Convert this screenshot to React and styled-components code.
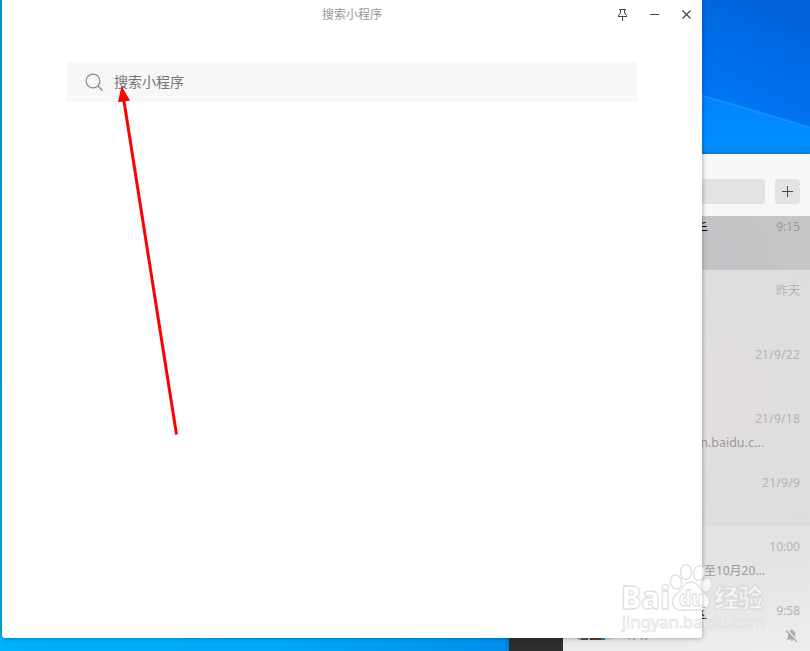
import React from 'react'
import styled, { createGlobalStyle } from 'styled-components'

const GlobalStyle = createGlobalStyle`
  * {
    box-sizing: border-box;
  }
  body {
    margin: 0;
    overflow: hidden;
    font-family: 'Noto Sans', 'Noto Sans CJK SC', sans-serif;
    font-size: 12px;
  }
`

const Desktop = styled.div`
  position: relative;
  width: 810px;
  height: 651px;
  overflow: hidden;
  background: linear-gradient(90deg, #00b0fa 0%, #00a8f8 35%, #008eec 63%);
`
const Wallpaper = styled.svg`
  position: absolute;
  top: 0;
  left: 0;
`

const ChatWindow = styled.div`
  position: absolute;
  left: 509px;
  top: 154px;
  width: 301px;
  height: 497px;
  display: flex;
  box-shadow: 0 0 6px rgba(0, 0, 0, 0.3);
`
const Rail = styled.div`
  width: 54px;
  background: #2e2e2e;
`
const ChatPane = styled.div`
  flex: 1;
  display: flex;
  flex-direction: column;
  background: #e6e5e4;
`
const ChatTop = styled.div`
  height: 62px;
  display: flex;
  gap: 10px;
  padding: 25px 10px 12px 12px;
  background: #f7f7f7;
`
const ChatSearch = styled.div`
  flex: 1;
  border-radius: 4px;
  background: #e2e2e2;
`
const AddButton = styled.div`
  width: 25px;
  display: flex;
  align-items: center;
  justify-content: center;
  border-radius: 4px;
  background: #e2e2e2;
`
const ChatList = styled.div`
  flex: 1;
  overflow: hidden;
`
const Scrolled = styled.div`
  margin-top: -10px;
`
const Group = styled.div`
  background: ${props =>
    props.$pinned
      ? 'radial-gradient(circle at 160px 190px, #e2dedd, #dfdedd 90px, #dddddd 150px)'
      : 'linear-gradient(175deg, #e3e3e3 30%, #e5e5e4 50%, #efeeed)'};
`
const Row = styled.div`
  height: 64px;
  display: flex;
  gap: 11px;
  padding: 12px 10px 0 14px;
  background: ${props =>
    props.$active ? 'radial-gradient(circle at 165px 50px, #c0c2c5, #c7c6c6 70px, #c4c4c4)' : 'none'};
`
const Avatar = styled.div`
  width: 36px;
  height: 36px;
  margin-top: 2px;
  border-radius: 3px;
  background: ${props => props.$bg || '#c9cdd0'};
`
const RowBody = styled.div`
  flex: 1;
  min-width: 0;
`
const Line = styled.div`
  display: flex;
  justify-content: space-between;
  align-items: center;
  height: 18px;
  margin-bottom: 6px;
  line-height: 18px;
  white-space: nowrap;
`
const Name = styled.span`
  width: ${props => props.$width || 'auto'};
  padding-top: 4px;
  text-align: right;
  font-size: 14px;
  color: #000;
`
const Time = styled.span`
  letter-spacing: ${props => (props.$long ? '0.25px' : '0')};
  color: ${props => (props.$dark ? '#999' : '#b3b3b3')};
`
const Message = styled.span`
  width: ${props => props.$width || 'auto'};
  text-align: right;
  font-size: ${props => props.$size || '12px'};
  color: #999;
`

const MiniWindow = styled.div`
  position: absolute;
  left: 2px;
  top: -4px;
  width: 700px;
  height: 642px;
  padding-top: 4px;
  border-radius: 3px;
  background: #fff;
  box-shadow: 0 0 5px rgba(0, 0, 0, 0.38);
`
const TitleBar = styled.div`
  height: 28px;
  display: grid;
  grid-template-columns: 1fr auto 1fr;
  align-items: center;
  padding-right: 8px;
`
const Title = styled.div`
  grid-column: 2;
  padding: 0 0 1px 8px;
  color: #999;
`
const Controls = styled.div`
  display: flex;
  justify-content: flex-end;
  gap: 16px;
  height: 16px;
  margin-top: 1px;
`
const SearchBox = styled.div`
  width: 572px;
  height: 40px;
  margin: 34px auto 0;
  display: flex;
  align-items: center;
  gap: 10px;
  padding-left: 19px;
  border-radius: 4px;
  background: #f7f7f7;
`
const Placeholder = styled.span`
  padding-bottom: 2px;
  font-size: 14px;
  color: #757575;
`

const Overlay = styled.svg`
  position: absolute;
  top: 0;
  left: 0;
  pointer-events: none;
`

const pinned = [
  { active: true, name: '文件传输助手', nameWidth: '72px', time: '9:15', dark: true },
  { time: '昨天' },
  { time: '21/9/22' },
  { time: '21/9/18', message: 'jingyan.baidu.c...', size: '12.5px' },
  { time: '21/9/9' },
]

const recent = [
  { time: '10:00', message: '9月30日至10月20...', messageWidth: '141px' },
  {
    name: '社区',
    nameWidth: '83px',
    time: '9:58',
    message: '嘀嘀',
    messageWidth: '24px',
    muted: true,
    avatar:
      'linear-gradient(90deg, #aaa 0 12%, #654f50 12% 30%, #bbb 30% 36%, #5a3b32 36% 68%, #178a91 68% 78%, #b9dce3 78%)',
  },
]

const MutedBell = () => (
  <svg width="16" height="18" viewBox="0 0 16 18">
    <path d="M2.500 13.500 4 11.500V8.500c0-2.200 1-3.500 2.700-4a1 1 0 0 1 2 0c1.600.5 2.600 1.800 2.600 4v3l1.600 2zM6 14.200h3.500l-1.700 1.300z" fill="#aaa" />
    <path d="m3 3.800 11 11.500" stroke="#ececec" strokeWidth="1.600" />
    <path d="m2 4.500 11 11.500" stroke="#aaa" strokeWidth="1.100" />
  </svg>
)

const Conversation = ({ item }) => (
  <Row $active={item.active}>
    <Avatar $bg={item.avatar} />
    <RowBody>
      <Line>
        <Name $width={item.nameWidth}>{item.name}</Name>
        <Time $dark={item.dark} $long={item.time.includes('/')}>{item.time}</Time>
      </Line>
      <Line>
        <Message $width={item.messageWidth || '140px'} $size={item.size}>{item.message}</Message>
        {item.muted && <MutedBell />}
      </Line>
    </RowBody>
  </Row>
)

const Watermark = () => (
  <g fill="#fff" fillOpacity="0.7" stroke="#d2d2d2" strokeOpacity="0.7" strokeWidth="1.300" strokeLinejoin="round">
    <ellipse cx="676" cy="582" rx="5.500" ry="7.200" transform="rotate(-12 676 582)" />
    <ellipse cx="686" cy="572" rx="5.500" ry="7.500" />
    <ellipse cx="699" cy="573" rx="5.500" ry="7.500" transform="rotate(10 699 573)" />
    <ellipse cx="706.500" cy="585" rx="5.500" ry="7" transform="rotate(15 706.5 585)" />
    <path d="M691 582c-7 0-8 6-12 10-6 4-8 8-6 13 3 7 11 5 18 5s15 2 18-5c2-6-1-9-6-13-4-4-5-10-12-10z" />
    <g fontFamily="'Open Sans', 'Noto Sans CJK SC', sans-serif" fontWeight="800">
      <text x="621" y="609" fontSize="32" textLength="49" lengthAdjust="spacingAndGlyphs">Bai</text>
      <text x="679" y="606" fontSize="21" textLength="25" lengthAdjust="spacingAndGlyphs">du</text>
      <text x="714" y="607" fontSize="25" textLength="49" fontWeight="900">经验</text>
    </g>
    <text
      x="622"
      y="628"
      fontFamily="'Noto Sans', sans-serif"
      fontSize="17"
      fontWeight="400"
      strokeWidth="0.9"
      strokeOpacity="0.6"
      textLength="143"
    >
      jingyan.baidu.com
    </text>
  </g>
)

export default function App() {
  return (
    <Desktop>
      <GlobalStyle />
      <Wallpaper width="810" height="651">
        <defs>
          <linearGradient id="sky" x1="0.3" y1="1" x2="0.7" y2="0">
            <stop offset="0" stopColor="#0078f8" />
            <stop offset="0.5" stopColor="#006eea" />
            <stop offset="1" stopColor="#0062d8" />
          </linearGradient>
          <linearGradient id="beam" x1="0" y1="0" x2="0" y2="1">
            <stop offset="0" stopColor="#0084fa" />
            <stop offset="1" stopColor="#0090fe" />
          </linearGradient>
          <linearGradient id="edge" x1="0" y1="0" x2="0" y2="1">
            <stop offset="0" stopColor="#00a0f0" />
            <stop offset="1" stopColor="#00b2fc" />
          </linearGradient>
        </defs>
        <rect width="4" height="651" fill="url(#edge)" />
        <rect x="700" width="110" height="130" fill="url(#sky)" />
        <path d="M700 95 810 127.500V156H700z" fill="url(#beam)" />
        <path d="M700 95 810 127.500" stroke="#1490fb" strokeWidth="2" />
      </Wallpaper>

      <ChatWindow>
        <Rail />
        <ChatPane>
          <ChatTop>
            <ChatSearch />
            <AddButton>
              <svg width="11" height="11" stroke="#4a4a4a">
                <path d="M0 5.500H11M5.500 0V11" />
              </svg>
            </AddButton>
          </ChatTop>
          <ChatList>
            <Scrolled>
              <Group $pinned>
                {pinned.map((item, i) => (
                  <Conversation key={i} item={item} />
                ))}
              </Group>
              <Group>
                {recent.map((item, i) => (
                  <Conversation key={i} item={item} />
                ))}
              </Group>
            </Scrolled>
          </ChatList>
        </ChatPane>
      </ChatWindow>

      <MiniWindow>
        <TitleBar>
          <Title>搜索小程序</Title>
          <Controls>
            <svg width="16" height="16" fill="none" stroke="#444">
              <path d="M5 2.500H12M6.500 2.500V6L4.500 8.500V9.500M10.500 2.500V6L12.500 8.500V9.500M4 9.500H13M8.500 9.500V14" />
            </svg>
            <svg width="16" height="16" stroke="#444">
              <path d="M4 7.500H13" />
            </svg>
            <svg width="16" height="16" stroke="#444" strokeWidth="1.200">
              <path d="m4.500 3.500 8 8M12.500 3.500 4.500 11.500" />
            </svg>
          </Controls>
        </TitleBar>
        <SearchBox>
          <svg width="19" height="19" fill="none" stroke="#858585" strokeWidth="1.200">
            <circle cx="8" cy="8" r="6.900" />
            <path d="m13 13 4.500 4.500" />
          </svg>
          <Placeholder>搜索小程序</Placeholder>
        </SearchBox>
      </MiniWindow>

      <Overlay width="810" height="651">
        <path d="M123.500 98 176.500 434.500" stroke="#f00" strokeWidth="3" />
        <path d="M121.500 86 130 100.500 118 102.300z" fill="#f00" />
        <Watermark />
      </Overlay>
    </Desktop>
  )
}
